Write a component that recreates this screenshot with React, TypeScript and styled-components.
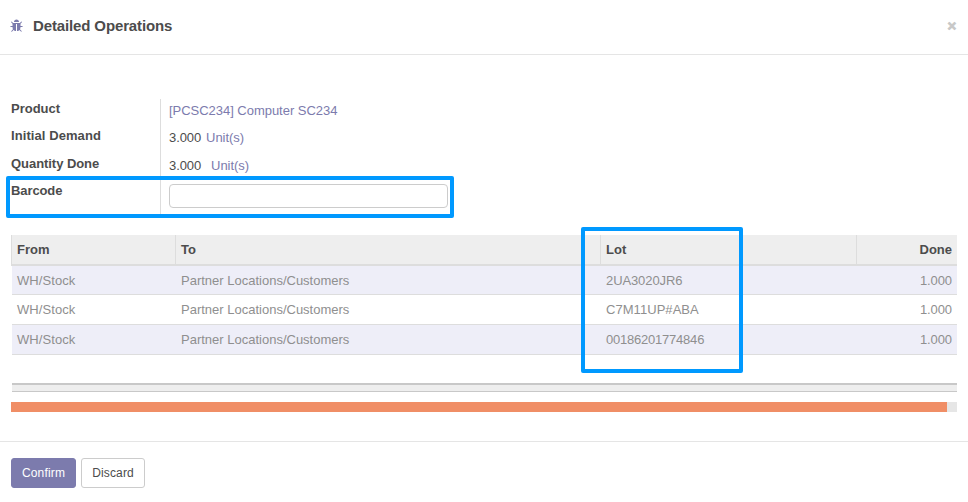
import React from "react";
import styled, { createGlobalStyle } from "styled-components";

const GlobalStyle = createGlobalStyle`
  * { box-sizing: border-box; }
  body {
    margin: 0;
    background: #fff;
    color: #4c4c4c;
    font: 13px/18px "Liberation Sans", Arial, sans-serif;
  }
`;

const Dialog = styled.div`
  position: relative;
  width: 968px;
  height: 502px;
  overflow: hidden;
`;

const Header = styled.header`
  display: flex;
  align-items: center;
  height: 55px;
  padding: 0 11px 2px 10px;
  border-bottom: 1px solid #e5e5e5;
`;

const BugIcon = styled.svg`
  width: 14px;
  height: 14px;
  fill: #7c7bad;
`;

const Title = styled.h4`
  flex: 1;
  margin: 0 0 0 9px;
  font-size: 15px;
  font-weight: bold;
  letter-spacing: -0.13px;
`;

const CloseButton = styled.button`
  width: 10px;
  height: 18px;
  padding: 0;
  border: 0;
  background: none;
  color: #c8c8c8;
  font: bold 15px/16px "Liberation Sans", Arial, sans-serif;
  -webkit-text-stroke: 0.8px #c8c8c8;
`;

const Form = styled.div`
  display: grid;
  grid-template-columns: 150px 288px;
  grid-template-rows: 27px 28px 27px 33px;
  margin: 44px 0 0 11px;
`;

const Label = styled.label<{ $spacing?: number }>`
  padding-top: 1px;
  border-right: 1px solid #ddd;
  font-weight: bold;
  letter-spacing: ${(p) => p.$spacing ?? 0}px;
`;

const Field = styled.div<{ $gap?: number }>`
  display: flex;
  align-items: flex-start;
  gap: ${(p) => p.$gap ?? 0}px;
  padding: 3px 0 0 8px;
`;

const Quantity = styled.span`
  letter-spacing: -0.1px;
`;

const Link = styled.a`
  color: #7c7bad;
  letter-spacing: -0.03px;
`;

const TextInput = styled.input`
  width: 279px;
  height: 24px;
  border: 1px solid #ccc;
  border-radius: 4px;
  background: #fff;
`;

const Table = styled.div`
  width: 946px;
  margin: 21px 0 0 11px;
`;

const HeadRow = styled.div`
  display: grid;
  grid-template-columns: 164px 425px 256px 101px;
  height: 31px;
  background: #eee;
  border-bottom: 2px solid #ddd;
`;

const HeadCell = styled.div<{ $right?: boolean }>`
  padding: 6px 5px 0;
  border-left: 1px solid #ddd;
  font-weight: bold;
  text-align: ${(p) => (p.$right ? "right" : "left")};
`;

const Row = styled.div<{ $striped: boolean; $height: number }>`
  display: grid;
  grid-template-columns: 164px 425px 256px 100px;
  align-items: start;
  height: ${(p) => p.$height}px;
  margin-left: 1px;
  padding-top: ${(p) => (p.$height === 29 ? 5 : 6)}px;
  border-bottom: 1px solid #ddd;
  background: ${(p) => (p.$striped ? "#eeeef8" : "#fff")};
  color: #8f8f8f;

  &:nth-child(2) {
    padding-top: 6px;
  }
`;

const Cell = styled.div<{ $right?: boolean; $spacing?: number }>`
  padding: 0 5px;
  text-align: ${(p) => (p.$right ? "right" : "left")};
  letter-spacing: ${(p) => p.$spacing ?? 0}px;
`;

const TableFoot = styled.div`
  height: 9px;
  margin: 28px 0 0 1px;
  border-top: 2px solid #c8c8c8;
  border-bottom: 1px solid #c8c8c8;
  background: #eee;
`;

const ProgressTrack = styled.div`
  width: 946px;
  height: 10px;
  margin: 10px 0 0 11px;
  background: #e6e6e6;
`;

const ProgressFill = styled.div`
  width: 936px;
  height: 10px;
  background: #f08e66;
`;

const Footer = styled.footer`
  display: flex;
  gap: 5px;
  margin-top: 29px;
  padding: 16px 11px 14px;
  border-top: 1px solid #e5e5e5;
`;

const Button = styled.button<{ $primary?: boolean }>`
  width: ${(p) => (p.$primary ? 65 : 64)}px;
  height: 30px;
  padding: 0;
  border: 1px solid ${(p) => (p.$primary ? "#7c7bad" : "#ccc")};
  border-radius: 3px;
  background: ${(p) => (p.$primary ? "#7c7bad" : "#fff")};
  color: ${(p) => (p.$primary ? "#fff" : "#4c4c4c")};
  font: 12px/18px "Liberation Sans", Arial, sans-serif;
  letter-spacing: 0.15px;
`;

/* Annotation frames drawn over the dialog */
const Highlight = styled.div`
  position: absolute;
  border: 4px solid #0099ff;
  border-radius: 2px;
  pointer-events: none;
`;

const BarcodeHighlight = styled(Highlight)`
  left: 6px;
  top: 176px;
  width: 448px;
  height: 42px;
`;

const LotHighlight = styled(Highlight)`
  left: 581px;
  top: 227px;
  width: 162px;
  height: 146px;
`;

const lots = [
  { lot: "2UA3020JR6", height: 29, spacing: -0.1 },
  { lot: "C7M11UP#ABA", height: 30, spacing: 0.05 },
  { lot: "00186201774846", height: 30, spacing: -0.22 },
];

export default function App() {
  return (
    <Dialog>
      <GlobalStyle />
      <Header>
        <BugIcon viewBox="0 0 1792 1792">
          <path d="M1632 960q0 26-19 45t-45 19h-224q0 171-67 290l208 209q19 19 19 45t-19 45q-18 19-45 19t-45-19l-198-197q-5 5-15 13t-42 28.5-65 36.5-82 29-97 13v-896h-128v896q-51 0-101.5-13.5t-87-33-66-39-43.5-32.5l-15-14-183 207q-20 21-48 21-24 0-43-16-19-18-20.5-44.5t15.5-46.5l202-227q-58-114-58-274h-224q-26 0-45-19t-19-45 19-45 45-19h224v-294l-173-173q-19-19-19-45t19-45 45-19 45 19l173 173h844l173-173q19-19 45-19t45 19 19 45-19 45l-173 173v294h224q26 0 45 19t19 45zm-480-576h-640q0-133 93.5-226.5t226.5-93.5 226.5 93.5 93.5 226.5z" />
        </BugIcon>
        <Title>Detailed Operations</Title>
        <CloseButton>×</CloseButton>
      </Header>

      <Form>
        <Label>Product</Label>
        <Field>
          <Link>[PCSC234] Computer SC234</Link>
        </Field>
        <Label $spacing={0.08}>Initial Demand</Label>
        <Field $gap={5}>
          <Quantity>3.000</Quantity>
          <Link>Unit(s)</Link>
        </Field>
        <Label $spacing={-0.05}>Quantity Done</Label>
        <Field $gap={10}>
          <Quantity>3.000</Quantity>
          <Link>Unit(s)</Link>
        </Field>
        <Label htmlFor="barcode" $spacing={-0.1}>
          Barcode
        </Label>
        <Field>
          <TextInput id="barcode" />
        </Field>
      </Form>

      <Table>
        <HeadRow>
          <HeadCell>From</HeadCell>
          <HeadCell>To</HeadCell>
          <HeadCell>Lot</HeadCell>
          <HeadCell $right>Done</HeadCell>
        </HeadRow>
        {lots.map(({ lot, height, spacing }, i) => (
          <Row key={lot} $striped={i % 2 === 0} $height={height}>
            <Cell $spacing={0.08}>WH/Stock</Cell>
            <Cell>Partner Locations/Customers</Cell>
            <Cell $spacing={spacing}>{lot}</Cell>
            <Cell $right $spacing={-0.1}>
              1.000
            </Cell>
          </Row>
        ))}
        <TableFoot />
      </Table>

      <ProgressTrack>
        <ProgressFill />
      </ProgressTrack>

      <Footer>
        <Button $primary>Confirm</Button>
        <Button>Discard</Button>
      </Footer>

      <BarcodeHighlight />
      <LotHighlight />
    </Dialog>
  );
}
